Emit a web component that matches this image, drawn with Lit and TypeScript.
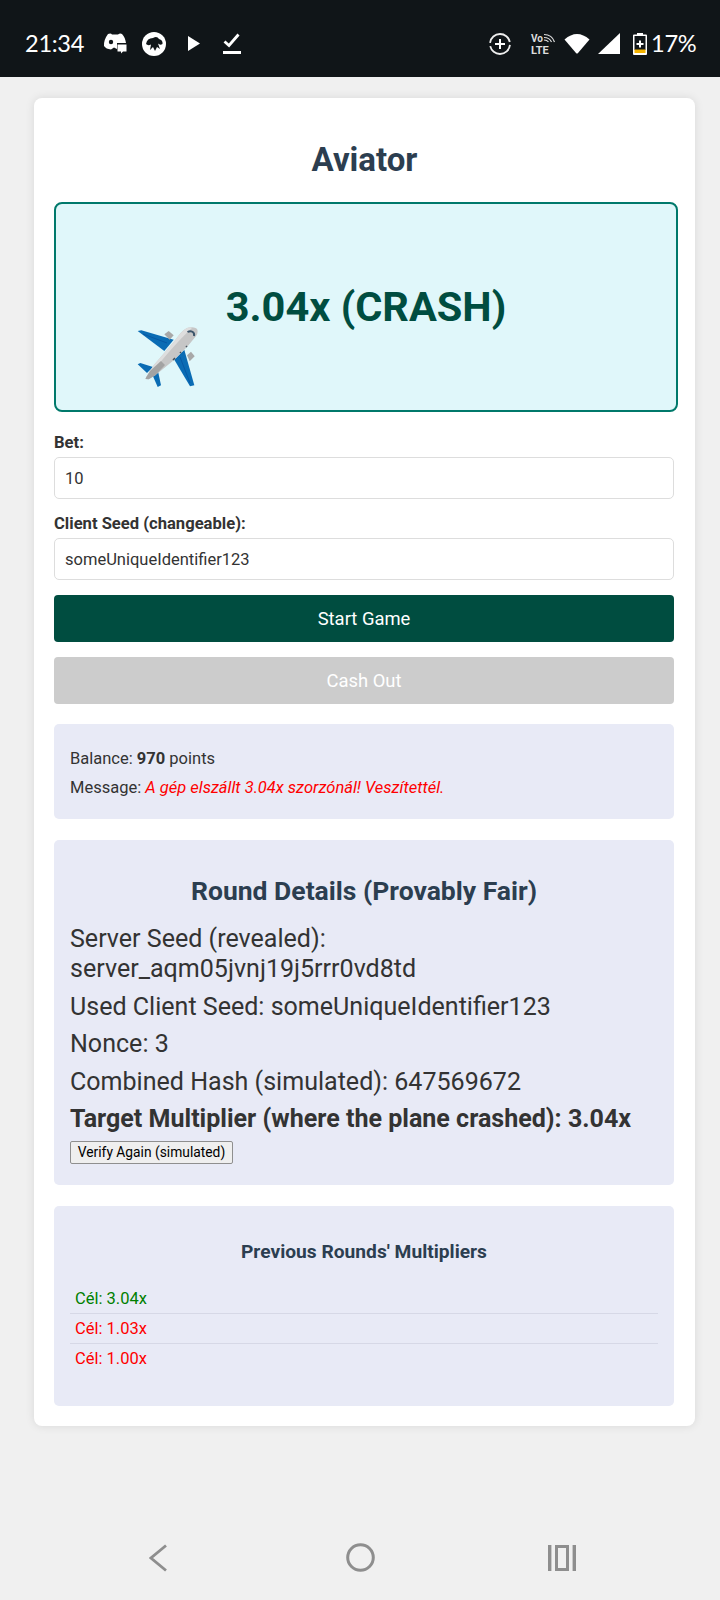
import { LitElement, html, css, svg } from "lit";
import { customElement } from "lit/decorators.js";

const plane = svg`
  <path d="M0.7 4 L4.3 3.3 L36.7 12.7 L27.3 24 Z" fill="#0a6cb4"/>
  <path d="M57.3 58.3 L53 59.3 L37.3 32.7 L47.3 22.7 Z" fill="#0a6cb4"/>
  <path d="M6 7 L30 16" stroke="#0653a0" stroke-width="0.8" fill="none"/>
  <path d="M53 56 L43 30" stroke="#0653a0" stroke-width="0.8" fill="none"/>
  <path d="M0.7 37.3 L3.3 36 L16 40 L10 46 Z" fill="#0a6cb4"/>
  <path d="M24 58.3 L20.7 60 L15 47 L20.7 42.7 Z" fill="#0a6cb4"/>
  <path d="M27.3 7.3 L31.7 4 L36.7 8.3 L32.7 12.7 Z" fill="#a8a8a8"/>
  <path d="M50 28.3 L54 24.7 L57.7 29.3 L52.7 34.3 Z" fill="#a8a8a8"/>
  <path d="M50 1 C54 -0.5 60 0 60.5 3 C61 6 60 8 58.3 10 L50 20 L36.7 33.3 L18.3 48.3 L11.7 52.3 L8.5 52 L9.3 50 L16.7 38.3 L36.7 15 L43 6.7 Q46 3 50 1 Z" fill="#c6c6c6"/>
  <path d="M9.3 50 L16.7 38.3 L36.7 15 L43 6.7 Q46 3 50 1 C52 0.5 54 0.4 55 1 C44 11 30 27 15 45 Z" fill="#dedede"/>
  <path d="M11.7 52.3 L8.5 52 L9.3 50 L13 44 L24 34 L28 38 L18.3 48.3 Z" fill="#a3a3a3"/>
  <path d="M50.5 5 C54 3 58 5 57 9" fill="none" stroke="#3b556b" stroke-width="2"/>
  <path d="M50 19 L49 20 M44 25 L43 26 M38 31 L36 33" stroke="#44505c" stroke-width="1.6"/>`;

@customElement("app-root")
export class AppRoot extends LitElement {
  static styles = css`
    :host {
      display: flex;
      flex-direction: column;
      height: 1600px;
      width: 720px;
      background: #f0f0f0;
      font-family: Roboto, "Liberation Sans", sans-serif;
      color: #333;
      overflow: hidden;
    }
    svg { display: block; flex: none; }
    .status {
      height: 77px;
      flex: none;
      box-sizing: border-box;
      background: #101518;
      color: #fff;
      display: flex;
      align-items: center;
      padding: 10px 26px 0 25px;
    }
    .time, .pct { font-size: 23.6px; font-family: Lato, sans-serif; padding-bottom: 2px; white-space: nowrap; letter-spacing: -0.3px; }
    .time { width: 60px; }
    .pct { width: 43px; margin-left: 4px; }
    .spacer { flex: 1; }
    .i-discord { margin-left: 18px; }
    .i-game { margin-left: 15px; }
    .i-play { margin-left: 22px; }
    .i-check { margin-left: 23px; }
    .i-volte { margin-left: 20px; overflow: visible; }
    .i-wifi { margin-left: 9px; }
    .i-signal { margin-left: 8px; }
    .i-batt { margin-left: 13px; }
    main { flex: 1; padding: 21px 25px 0 34px; }
    .card {
      width: 661px;
      box-sizing: border-box;
      background: #fff;
      border-radius: 8px;
      box-shadow: 0 0 10px rgba(0,0,0,0.1);
      padding: 20px;
    }
    h1 {
      margin: 22px 0 22px;
      text-align: center;
      color: #2c3e50;
      font-size: 33px;
      line-height: 40px;
      font-weight: 700;
    }
    .game {
      position: relative;
      box-sizing: border-box;
      width: 624px;
      height: 210px;
      background: #e0f7fa;
      border: 2px solid #00796b;
      border-radius: 8px;
      display: flex;
      align-items: center;
      justify-content: center;
      color: #004d40;
      font-size: 41.5px;
      font-weight: 700;
      margin-bottom: 21px;
    }
    .mult { padding-bottom: 2px; }
    .plane { position: absolute; left: 81px; bottom: 23px; width: 60px; height: 60px; overflow: visible; }
    label { display: block; font-weight: 700; font-size: 16.6px; line-height: 19px; margin-bottom: 5px; }
    .input {
      box-sizing: border-box;
      width: 620px;
      height: 42px;
      border: 1px solid #ddd;
      border-radius: 5px;
      padding: 0 10px;
      font: 16.5px Roboto, sans-serif;
      color: #333;
      display: block;
      margin-bottom: 15px;
      background: #fff;
    }
    button.main {
      display: block;
      box-sizing: border-box;
      width: 620px;
      height: 47px;
      border: 0;
      border-radius: 4px;
      background: #004d40;
      color: #fff;
      font: 18.4px Roboto, sans-serif;
      margin-bottom: 15px;
    }
    button.main:disabled { background: #ccc; }
    .panel {
      box-sizing: border-box;
      width: 620px;
      background: #e8eaf6;
      border-radius: 5px;
      padding: 20px 16px 0;
      margin-top: 21px;
    }
    .info { height: 95px; font-size: 16.5px; line-height: 29px; margin-top: 20px; }
    .info b { font-weight: 700; }
    .info em { color: #f00; font-style: italic; }
    .details { height: 345px; font-size: 25.05px; }
    h3 {
      margin: 16px 0 19px;
      text-align: center;
      color: #2c3e50;
      font-size: 26.5px;
      line-height: 29px;
      font-weight: 700;
    }
    .details p { margin: 0 0 7.5px; line-height: 30px; }
    .details p.b { font-weight: 700; margin-bottom: 6.5px; }
    button.verify {
      display: block;
      box-sizing: border-box;
      width: 163px;
      height: 23px;
      padding: 0;
      font: 13.8px Roboto, sans-serif;
      color: #000;
      background: #efefef;
      border: 1px solid #8f8f8f;
      border-radius: 2px;
    }
    .history { height: 200px; }
    h4 {
      margin: 14px 0 20px;
      text-align: center;
      color: #2c3e50;
      font-size: 19.2px;
      line-height: 24px;
      font-weight: 700;
    }
    .row {
      padding: 5px;
      height: 30px;
      box-sizing: border-box;
      font-size: 16.5px;
      line-height: 19px;
      border-bottom: 1px solid #d6d8e6;
    }
    .row:last-child { border-bottom: 0; }
    .g { color: #008000; }
    .r { color: #f00; }
    .nav {
      flex: none;
      display: flex;
      align-items: center;
      padding: 0 145px 28px 149px;
    }
    .nav-home { margin-left: 179px; }
    .nav-recent { margin-left: 173px; }
  `;

  render() {
    return html`
      <div class="status">
        <span class="time">21:34</span>
        <svg class="i-discord" width="24" height="21" viewBox="0 0 24 21"><path d="M5 1 Q8 0 9 1.5 L15 1.5 Q17 0 19 1 Q22 4 23 10 L14 10 V16 L11 14.5 L8 16.5 Q3 16 1 13 Q0.5 7 5 1 Z" fill="#fff"/><circle cx="8" cy="9" r="2.2" fill="#101518"/><path d="M14.5 11.5 H23.5 V18.5 H20 L18 20.5 V18.5 H14.5 Z" fill="#fff"/></svg>
        <svg class="i-game" width="24" height="24" viewBox="0 0 24 24"><circle cx="12" cy="12" r="12" fill="#fff"/><path d="M4 12 Q5 6 11 6 Q15 3.5 17 7 Q21 8 20.5 12 Q18 13.5 16 11.5 L18 17 L15 15 L13 19 L11 15 L8 18 L9 12.5 Q6 14 4 12 Z" fill="#101518"/></svg>
        <svg class="i-play" width="12" height="15" viewBox="0 0 12 15"><path d="M0 0 L12 7.5 L0 15 Z" fill="#fff"/></svg>
        <svg class="i-check" width="18" height="21" viewBox="0 0 18 21"><path d="M1.5 8.5 L6 12.5 L15.5 1.5" fill="none" stroke="#fff" stroke-width="2.8"/><rect x="0" y="18" width="18" height="3" fill="#fff"/></svg>
        <div class="spacer"></div>
        <svg width="22" height="22" viewBox="0 0 22 22"><circle cx="11" cy="11" r="10" fill="none" stroke="#eee" stroke-width="1.8" stroke-dasharray="28 3.4" stroke-dashoffset="-1"/><path d="M11 6 V16 M6 11 H16" stroke="#fff" stroke-width="2"/></svg>
        <svg class="i-volte" width="24" height="21" viewBox="0 0 24 21"><text x="0" y="9" font-size="10" font-weight="700" fill="#ddd" font-family="Roboto">Vo</text><text x="0" y="20.5" font-size="11" font-weight="700" fill="#ddd" font-family="Roboto">LTE</text><path d="M13 1.5 Q21 1.5 23.5 9 M13 4.5 Q18.5 4.5 20.5 9 M13 7 Q16 7 17.5 9" fill="none" stroke="#ddd" stroke-width="1.2"/></svg>
        <svg class="i-wifi" width="26" height="21" viewBox="0 0 26 21"><path d="M0.5 6.5 Q13 -4.5 25.5 6.5 L14 20 Q13 21 12 20 Z" fill="#fff"/></svg>
        <svg class="i-signal" width="22" height="21" viewBox="0 0 22 21"><path d="M0 21 L22 0 V21 Z" fill="#fff"/></svg>
        <svg class="i-batt" width="14" height="22" viewBox="0 0 14 22"><path d="M4 0 H10 V1.5 H13 Q14 1.5 14 2.5 V21 Q14 22 13 22 H1 Q0 22 0 21 V2.5 Q0 1.5 1 1.5 H4 Z" fill="#fff"/><rect x="1.5" y="3" width="11" height="14" fill="#101518"/><rect x="1.5" y="16.5" width="11" height="3.5" fill="#f5b400"/><path d="M7 7.5 V14.5 M3.5 11 H10.5" stroke="#fff" stroke-width="2"/></svg>
        <span class="pct">17%</span>
      </div>
      <main>
        <div class="card">
          <h1>Aviator</h1>
          <div class="game">
            <span class="mult">3.04x (CRASH)</span>
            <svg class="plane" viewBox="0 0 60 60">${plane}</svg>
          </div>
          <label>Bet:</label>
          <input class="input" value="10" />
          <label>Client Seed (changeable):</label>
          <input class="input" value="someUniqueIdentifier123" />
          <button class="main">Start Game</button>
          <button class="main" disabled>Cash Out</button>
          <div class="panel info">
            <div>Balance: <b>970</b> points</div>
            <div>Message: <em>A gép elszállt 3.04x szorzónál! Veszítettél.</em></div>
          </div>
          <div class="panel details">
            <h3>Round Details (Provably Fair)</h3>
            <p>Server Seed (revealed): server_aqm05jvnj19j5rrr0vd8td</p>
            <p>Used Client Seed: someUniqueIdentifier123</p>
            <p>Nonce: 3</p>
            <p>Combined Hash (simulated): 647569672</p>
            <p class="b">Target Multiplier (where the plane crashed): 3.04x</p>
            <button class="verify">Verify Again (simulated)</button>
          </div>
          <div class="panel history">
            <h4>Previous Rounds' Multipliers</h4>
            <div class="row g">Cél: 3.04x</div>
            <div class="row r">Cél: 1.03x</div>
            <div class="row r">Cél: 1.00x</div>
          </div>
        </div>
      </main>
      <div class="nav">
        <svg width="18" height="28" viewBox="0 0 18 28"><path d="M17 1.5 L2 14 L17 26.5" fill="none" stroke="#8e8e8e" stroke-width="2.8"/></svg>
        <svg class="nav-home" width="29" height="29" viewBox="0 0 29 29"><circle cx="14.5" cy="14.5" r="12.8" fill="none" stroke="#8e8e8e" stroke-width="3"/></svg>
        <svg class="nav-recent" width="28" height="26" viewBox="0 0 28 26"><path d="M1.7 0 V26 M26.3 0 V26" stroke="#8e8e8e" stroke-width="3.4"/><rect x="8.5" y="1.5" width="11" height="23" fill="none" stroke="#8e8e8e" stroke-width="3"/></svg>
      </div>
    `;
  }
}
